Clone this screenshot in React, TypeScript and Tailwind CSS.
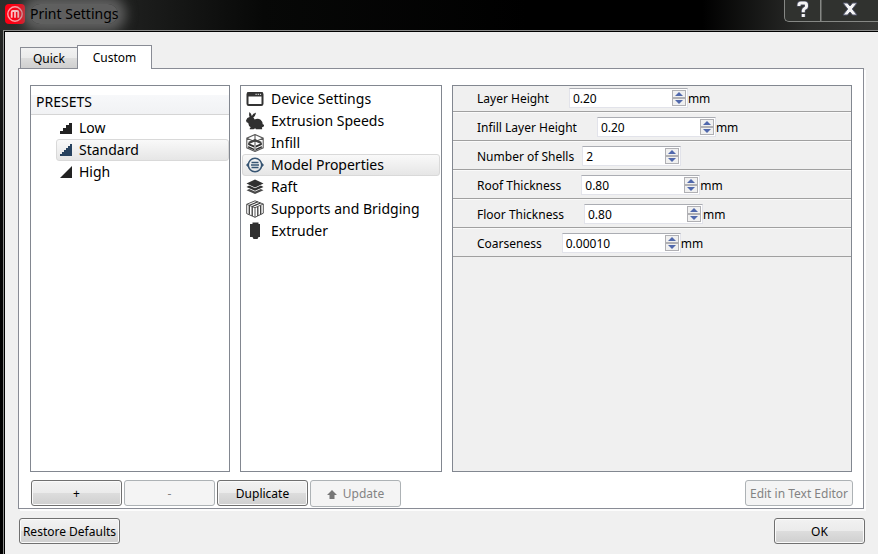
import { useState, type ReactNode } from "react";

const appFont = "font-['Noto_Sans','Open_Sans',sans-serif]";

function Logo() {
  return (
    <svg width="20" height="20" viewBox="0 0 20 20" className="shrink-0" aria-hidden="true">
      <rect width="20" height="20" rx="4" fill="#fd0014" />
      <circle cx="10" cy="10" r="7.200" fill="none" stroke="#ffa4aa" strokeWidth="1.400" />
      <path d="M6.700 13.800V8.200q0-1.200 1.200-1.200h4.200q1.200 0 1.200 1.200v5.600M10 7.200v6.600" fill="none" stroke="#ffc4c6" strokeWidth="1.800" />
    </svg>
  );
}

function StairsLow() {
  return (
    <svg width="13" height="12" viewBox="0 0 13 12" shapeRendering="crispEdges" aria-hidden="true">
      <path d="M0 12V9h3V6h3V3h3V1h3v11z" fill="#222" />
    </svg>
  );
}
function StairsStandard() {
  return (
    <svg width="13" height="12" viewBox="0 0 13 12" shapeRendering="crispEdges" aria-hidden="true">
      <path d="M0 12V10h2V8h2V6h2V4h2V2h2V0h2v12z" fill="#27425f" />
    </svg>
  );
}
function StairsHigh() {
  return (
    <svg width="13" height="12" viewBox="0 0 13 12" aria-hidden="true">
      <path d="M0 12L12 0v12z" fill="#222" />
    </svg>
  );
}

function DeviceIcon() {
  return (
    <svg width="18" height="18" viewBox="0 0 18 18" aria-hidden="true">
      <rect x="1.500" y="3" width="15" height="12" rx="1.200" fill="none" stroke="#333" strokeWidth="2" />
      <path d="M1 2.500h16V6.500H1z" fill="#333" />
      <path d="M9.500 4.300h1.200M11.700 4.300h1.200M13.900 4.300h1.200" stroke="#fff" strokeWidth="1" />
    </svg>
  );
}
function RabbitIcon() {
  return (
    <svg width="18" height="18" viewBox="0 0 18 18" aria-hidden="true">
      <path
        d="M3.500 0Q5.300 1.500 5.800 4Q7 1.200 10 .8Q9.500 4 7.300 5.400Q8.300 6.200 8.500 7.400Q12 5.800 14.600 7.700Q16.700 9.500 16.700 12.200Q18.200 12.300 18 14.100Q17.300 15.500 15.900 15L16.200 17.300H10L9.200 16.300L7.500 17.300H3.800Q3.400 16.100 4.800 15.300Q2.200 13.800 2.300 11Q-.2 10.600.1 8.200Q.9 5.700 3.600 5.100Q2.600 2.500 3.500 0z"
        fill="#303030"
      />
    </svg>
  );
}
function InfillIcon() {
  return (
    <svg width="18" height="18" viewBox="0 0 18 18" aria-hidden="true" fill="none" stroke="#5a5a5a">
      <path d="M9 .5L17.200 4.200v9.600L9 17.500L.8 13.800V4.200zM.8 4.200L9 7.700L17.200 4.200M9 .5v16.500" strokeWidth="1.100" />
      <path d="M2.500 7.800L9 5l6.500 2.800v2.400L9 7.400L2.500 10.200z" fill="#444" stroke="none" />
      <path d="M2.200 9l5.900 2.600v2L2.200 11zM15.800 9l-5.900 2.600v2l5.900-2.600zM2.200 12.100l5.900 2.600v1.600l-5.900-2.600zM15.800 12.100l-5.900 2.600v1.600l5.900-2.600z" fill="#2e2e2e" stroke="none" />
    </svg>
  );
}
function ModelIcon() {
  return (
    <svg width="18" height="18" viewBox="0 0 18 18" aria-hidden="true">
      <circle cx="9" cy="9" r="6.700" fill="none" stroke="#375573" strokeWidth="1.500" />
      <path d="M5.500 6.500h7M5 9h8M5.500 11.500h7" stroke="#375573" strokeWidth="1.300" />
      <path d="M2.400 6.600v4.800L0 9zM15.600 6.600v4.800L18 9z" fill="#375573" />
    </svg>
  );
}
function RaftIcon() {
  return (
    <svg width="18" height="18" viewBox="0 0 18 18" aria-hidden="true" fill="#303030">
      <path d="M9 1.500l8.500 4L9 9.500L.5 5.500z" />
      <path d="M.5 9l2.700-1.400L9 10.300l5.800-2.700L17.500 9L9 12.800z" />
      <path d="M.5 12.300l2.700-1.400L9 13.600l5.800-2.700l2.700 1.400L9 16.100z" fill="#4a4a4a" />
    </svg>
  );
}
function SupportsIcon() {
  return (
    <svg width="18" height="18" viewBox="0 0 18 18" aria-hidden="true" fill="none" stroke="#555" strokeWidth="1">
      <path d="M.7 4.300L9 .8L17.300 4v9.200L9 17.300L.7 13.600zM.7 4.300L9 7.700L17.300 4M9 7.700v9.600" />
      <path d="M3.300 5.500v9M6.200 6.800v9.200M11.800 6.700v9.200M14.700 5.400v9.200" stroke="#3c3c3c" strokeWidth="1.300" />
      <path d="M3.400 5.300L11.800 1.800M6.200 6.500L14.600 3" stroke="#3c3c3c" strokeWidth="1.200" />
    </svg>
  );
}
function ExtruderIcon() {
  return (
    <svg width="18" height="18" viewBox="0 0 18 18" aria-hidden="true">
      <path d="M4 2h2.500V.5h6V2H14v13h-1.500l-1 2h-4l-1-2H4z" fill="#303030" />
    </svg>
  );
}

const presets = [
  { name: "Low", icon: <StairsLow /> },
  { name: "Standard", icon: <StairsStandard /> },
  { name: "High", icon: <StairsHigh /> },
];

const categories = [
  { name: "Device Settings", icon: <DeviceIcon /> },
  { name: "Extrusion Speeds", icon: <RabbitIcon /> },
  { name: "Infill", icon: <InfillIcon /> },
  { name: "Model Properties", icon: <ModelIcon /> },
  { name: "Raft", icon: <RaftIcon /> },
  { name: "Supports and Bridging", icon: <SupportsIcon /> },
  { name: "Extruder", icon: <ExtruderIcon /> },
];

const settings = [
  { id: "layer", label: "Layer Height", value: "0.20", step: 0.01, digits: 2, unit: "mm" },
  { id: "infill", label: "Infill Layer Height", value: "0.20", step: 0.01, digits: 2, unit: "mm" },
  { id: "shells", label: "Number of Shells", value: "2", step: 1, digits: 0, unit: "" },
  { id: "roof", label: "Roof Thickness", value: "0.80", step: 0.01, digits: 2, unit: "mm" },
  { id: "floor", label: "Floor Thickness", value: "0.80", step: 0.01, digits: 2, unit: "mm" },
  { id: "coarse", label: "Coarseness", value: "0.00010", step: 0.0001, digits: 5, unit: "mm" },
];

function ListRow({ icon, name, active, onClick, tight }: { icon: ReactNode; name: string; active: boolean; onClick: () => void; tight?: boolean }) {
  return (
    <li>
      <button
        type="button"
        aria-pressed={active}
        onClick={onClick}
        className={`flex h-[22px] w-full items-center rounded-[3px] border pl-[3px] text-left text-[14px] leading-5 whitespace-nowrap ${
          tight ? "gap-1.5" : "gap-[7px]"
        } ${active ? "border-[#d9d9d9] bg-linear-to-b from-[#f9f9f9] to-[#e6e6e6]" : "border-transparent"}`}
      >
        {icon}
        {name}
      </button>
    </li>
  );
}

function PushButton({ children, disabled, className }: { children: ReactNode; disabled?: boolean; className: string }) {
  return (
    <button
      type="button"
      disabled={disabled}
      className={`flex items-center justify-center rounded-[3px] border pt-px whitespace-nowrap ${
        disabled
          ? "border-[#adb2b5] bg-[#f4f4f4] text-[#838383]"
          : "border-[#707070] bg-[linear-gradient(#f2f2f2,#ebebeb_48%,#dddddd_50%,#cfcfcf)] text-black shadow-[inset_0_0_0_1px_#fafafa]"
      } ${className}`}
    >
      {children}
    </button>
  );
}

function StepButton({ label, up, onClick }: { label: string; up?: boolean; onClick: () => void }) {
  return (
    <button
      type="button"
      aria-label={label}
      onClick={onClick}
      className="flex h-2 w-[14px] items-center justify-center border border-[#b0b0b4] bg-[#f0f0f0]"
    >
      <svg width="8" height="4" viewBox="0 0 8 4" aria-hidden="true">
        <path d={up ? "M0 4L4 0l4 4z" : "M0 0h8L4 4z"} fill="#5068ac" />
      </svg>
    </button>
  );
}

function SettingRow({ item, first }: { item: (typeof settings)[number]; first: boolean }) {
  const [value, setValue] = useState(item.value);
  const bump = (d: number) => setValue((v) => Math.max(0, Number(v) + d * item.step).toFixed(item.digits));
  const whole = item.digits === 0;
  return (
    <div className={`flex items-end border-b border-[#a0a0a0] pb-[3px] pl-6 ${first ? "h-[26px]" : "h-[29px] border-t border-t-[#fafafa]"}`}>
      <label htmlFor={item.id} className="h-[18px] leading-[18px] whitespace-nowrap">
        {item.label}
      </label>
      <div
        className={`flex h-5 items-center border border-[#e2e3ea] border-t-[#abadb3] bg-white pr-px ${
          whole ? "ml-2 w-[99px]" : "ml-5 w-[119px]"
        }`}
      >
        <input
          id={item.id}
          value={value}
          onChange={(e) => setValue(e.target.value)}
          className="h-[18px] min-w-0 flex-1 bg-transparent pt-px pl-[3px] leading-[18px] outline-none"
        />
        <div className="flex flex-col">
          <StepButton label={`Increase ${item.label}`} up onClick={() => bump(1)} />
          <StepButton label={`Decrease ${item.label}`} onClick={() => bump(-1)} />
        </div>
      </div>
      <span className="h-[18px] leading-[18px]">{item.unit}</span>
    </div>
  );
}

export default function App() {
  const [preset, setPreset] = useState("Standard");
  const [category, setCategory] = useState("Model Properties");
  return (
    <div className={`flex min-h-screen flex-col bg-linear-to-b from-[#2c2e2c] via-[#111] via-25% to-black text-[12px] text-black ${appFont}`}>
      <header className="flex h-[30px] items-start justify-between overflow-hidden bg-[linear-gradient(90deg,#2c2e2c,#1c1d1c_16%,#070807_30%,#000_60%,#000_80%,#2c2d2b_92%,#383937)]">
        <div className="flex items-center gap-[5px] pt-1 pl-[5px]">
          <Logo />
          <h1 className="h-5 rounded-full bg-[#6e6e6e]/80 text-[14px] leading-5 shadow-[0_0_12px_8px_#6e6e6ecc]">Print Settings</h1>
        </div>
        <div className="flex h-[22px] rounded-bl-[5px] border-b border-l border-[#868885] bg-[#30322f]">
          <button type="button" aria-label="Help" className="flex w-9 justify-center border-r border-[#868885] pt-px">
            <svg width="14" height="17" viewBox="0 0 14 17" aria-hidden="true">
              <path d="M3 5.500V4q0-2 2-2h3.500q2 0 2 2v1.500q0 1-1.500 1.800T7.300 9.500v2M7.300 13v3" fill="none" stroke="#50546a" strokeWidth="4.400" />
              <path d="M3 5V4q0-2 2-2h3.500q2 0 2 2v1.500q0 1-1.500 1.800T7.300 9.500v1.800M7.300 13v3" fill="none" stroke="#f4f4f4" strokeWidth="3" />
            </svg>
          </button>
          <button type="button" aria-label="Close" className="flex w-[57px] justify-center border-l border-[#5b5d5a] pt-0.5">
            <svg width="16" height="14" viewBox="0 0 16 14" aria-hidden="true">
              <path d="M1 1h4.500L8 4l2.500-3H15l-4.700 6l4.700 6h-4.500L8 10l-2.500 3H1l4.700-6z" fill="#f4f4f4" stroke="#50546a" />
            </svg>
          </button>
        </div>
      </header>

      <main className="ml-[3px] flex flex-1 flex-col border-t border-l border-[#8b8c8b]">
        <div className="flex flex-1 flex-col border-t border-l border-black bg-[#f0f0f0] pt-[13px] pr-[14px] pb-[10px] pl-[13px]">
          <div role="tablist" className="z-10 -mb-px ml-[2px] flex items-end">
            <button type="button" role="tab" aria-selected="false" className="mb-px h-[21px] w-[57px] border border-r-0 border-b-0 border-[#898c95] bg-[linear-gradient(#f2f2f2,#ebebeb_48%,#dddddd_50%,#cfcfcf)] pt-px">
              Quick
            </button>
            <button type="button" role="tab" aria-selected="true" className="h-6 w-[75px] border border-b-0 border-[#898c95] bg-white">
              Custom
            </button>
          </div>

          <section className="flex flex-1 flex-col border border-[#898c95] bg-white px-[11px] pt-4 pb-px shadow-[2px_2px_0_#fcfcfc]">
            <div className="grid flex-1 grid-cols-[200fr_202fr_400fr] gap-[10px]">
              <div className="border border-[#828790]">
                <h2 className="h-[29px] border-b border-[#d5d5d5] bg-[linear-gradient(#fff_9px,#f7f8fa_9px,#f1f2f4)] pt-1.5 pl-[5px] text-[14px] leading-5">PRESETS</h2>
                <ul className="pt-0.5 pl-[25px]">
                  {presets.map((p) => (
                    <ListRow key={p.name} {...p} active={p.name === preset} onClick={() => setPreset(p.name)} tight />
                  ))}
                </ul>
              </div>
              <ul className="border border-[#828790] px-px pt-0.5">
                {categories.map((c) => (
                  <ListRow key={c.name} {...c} active={c.name === category} onClick={() => setCategory(c.name)} />
                ))}
              </ul>
              <div className="border border-[#828790] bg-[#f0f0f0]">
                {settings.map((s, i) => (
                  <SettingRow key={s.id} item={s} first={i === 0} />
                ))}
              </div>
            </div>
            <div className="-mr-px flex items-start justify-between pt-2 pl-px">
              <div className="flex items-start gap-0.5">
                <PushButton className="h-[26px] w-[91px]">+</PushButton>
                <PushButton className="h-[26px] w-[91px]" disabled>-</PushButton>
                <PushButton className="h-[26px] w-[91px]">Duplicate</PushButton>
                <PushButton className="h-[27px] w-[91px] gap-1.5" disabled>
                  <svg width="10" height="9" viewBox="0 0 10 9" aria-hidden="true">
                    <path d="M5 0l5 5H7.500v4h-5V5H0z" fill="#777" />
                  </svg>
                  Update
                </PushButton>
              </div>
              <PushButton className="h-[26px] w-[108px]" disabled>Edit in Text Editor</PushButton>
            </div>
          </section>

          <footer className="-mr-px flex justify-between pt-[9px] pl-px">
            <PushButton className="h-[26px] w-[101px]">Restore Defaults</PushButton>
            <PushButton className="h-[26px] w-[91px]">OK</PushButton>
          </footer>
        </div>
      </main>
    </div>
  );
}
